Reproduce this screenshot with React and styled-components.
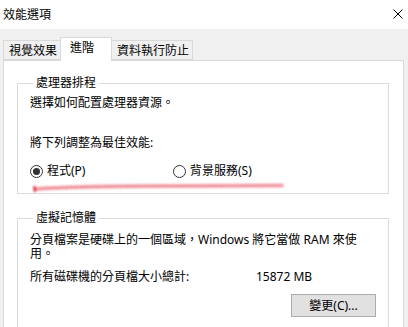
import React from 'react'
import styled, { createGlobalStyle } from 'styled-components'

const GlobalStyle = createGlobalStyle`
  html, body {
    margin: 0;
    padding: 0;
    background: #f0f0f0;
  }
  body {
    font-family: "Noto Sans", "Noto Sans CJK TC", sans-serif;
    font-size: 12px;
    color: #000;
  }
`

const Window = styled.div`
  width: 408px;
  height: 327px;
  overflow: hidden;
  background: #f0f0f0;
  display: flex;
  flex-direction: column;
`

const TitleBar = styled.div`
  height: 29px;
  flex: none;
  background: #fff;
  display: flex;
  align-items: center;
  justify-content: space-between;
  padding: 0 5px 0 3px;
  line-height: 14px;
`

const CloseButton = styled.svg`
  width: 10px;
  height: 10px;
  margin-top: -2px;
`

const Body = styled.div`
  padding: 8px 4px 0 3px;
  display: flex;
  flex-direction: column;
`

const TabRow = styled.div`
  display: flex;
  align-items: flex-end;
  height: 23px;
  position: relative;
  z-index: 1;
`

const Tab = styled.div`
  box-sizing: border-box;
  width: ${p => p.$w}px;
  height: ${p => (p.$active ? 24 : 20)}px;
  border: 1px solid #d9d9d9;
  border-bottom: ${p => (p.$active ? 'none' : '1px solid #d9d9d9')};
  background: ${p => (p.$active ? '#fff' : '#f0f0f0')};
  margin-bottom: ${p => (p.$active ? '-1px' : '0')};
  margin-left: ${p => (p.$first ? 0 : -1)}px;
  padding: ${p => (p.$active ? '3px 0 0 9px' : '3px 0 0 5px')};
  line-height: 14px;
  white-space: nowrap;
`

const Panel = styled.div`
  box-sizing: border-box;
  background: #fff;
  border: 1px solid #d9d9d9;
  height: 280px;
  padding: 15px 14px 0 13px;
`

const Group = styled.fieldset`
  position: relative;
  margin: 0 0 ${p => p.$mb || 0}px 0;
  border: 1px solid #dcdcdc;
  padding: 0 12px ${p => p.$pb}px 12px;
  display: block;
`

const Legend = styled.legend`
  padding: 0 3px 0 3px;
  margin-left: 3px;
  line-height: 14px;
`

const Line = styled.div`
  line-height: 14px;
  margin-top: ${p => p.$mt || 0}px;
  white-space: nowrap;
`

const RadioRow = styled.div`
  display: flex;
  align-items: center;
  margin-top: 14px;
  height: 14px;
`

const RadioItem = styled.label`
  display: flex;
  align-items: center;
  gap: 4px;
  width: ${p => p.$w}px;
  line-height: 14px;
`

const RadioCircle = styled.span`
  box-sizing: border-box;
  width: 13px;
  height: 13px;
  border-radius: 50%;
  border: 1px solid #333;
  background: #fff;
  display: flex;
  align-items: center;
  justify-content: center;
  &::after {
    content: '';
    width: 7px;
    height: 7px;
    border-radius: 50%;
    background: ${p => (p.$checked ? '#333' : 'transparent')};
  }
`

const Squiggle = styled.svg`
  position: absolute;
  left: 14px;
  top: 91px;
  width: 254px;
  height: 12px;
  pointer-events: none;
`

const TotalRow = styled.div`
  display: flex;
  line-height: 14px;
  margin-top: 9px;
`

const TotalLabel = styled.span`
  width: 226px;
`

const ButtonRow = styled.div`
  display: flex;
  justify-content: flex-end;
  margin-top: 10px;
`

const Button = styled.button`
  box-sizing: border-box;
  width: 85px;
  height: 23px;
  background: #e1e1e1;
  border: 1px solid #adadad;
  font: inherit;
  color: #000;
  padding: 0;
  line-height: 14px;
`

function Radio({ checked, label, w }) {
  return (
    <RadioItem $w={w}>
      <RadioCircle $checked={checked} />
      <span>{label}</span>
    </RadioItem>
  )
}

export default function App() {
  return (
    <Window>
      <GlobalStyle />
      <TitleBar>
        <span>效能選項</span>
        <CloseButton viewBox="0 0 10 10">
          <path d="M0.5 0.5 L9.5 9.5 M9.5 0.5 L0.5 9.5" stroke="#000" strokeWidth="1" fill="none" />
        </CloseButton>
      </TitleBar>
      <Body>
        <TabRow>
          <Tab $w={58} $first>視覺效果</Tab>
          <Tab $w={52} $active>進階</Tab>
          <Tab $w={82}>資料執行防止</Tab>
        </TabRow>
        <Panel>
          <Group $pb={15} $mb={17}>
            <Legend>處理器排程</Legend>
            <Line $mt={6}>選擇如何配置處理器資源。</Line>
            <Line $mt={26}>將下列調整為最佳效能:</Line>
            <RadioRow>
              <Radio checked label="程式(P)" w={143} />
              <Radio label="背景服務(S)" />
            </RadioRow>
            <Squiggle viewBox="0 0 254 12">
              <defs>
                <filter id="soft" x="-5%" y="-50%" width="110%" height="200%">
                  <feGaussianBlur stdDeviation="0.8" />
                </filter>
              </defs>
              <g filter="url(#soft)" fill="none" strokeLinecap="round">
                <path d="M3 8 C 40 5.5, 90 5, 140 5 S 220 4.5, 250 4.5" stroke="#ef8a95" strokeWidth="4" opacity="0.7" />
                <path d="M3 8 C 40 5.5, 90 5, 140 5 S 220 4.5, 250 4.5" stroke="#e2404f" strokeWidth="1.6" opacity="0.45" strokeDasharray="3 2" />
                <path d="M2.5 6 L3 10" stroke="#e0283a" strokeWidth="2.6" opacity="0.9" />
              </g>
            </Squiggle>
          </Group>
          <Group $pb={20}>
            <Legend>虛擬記憶體</Legend>
            <Line $mt={8}>分頁檔案是硬碟上的一個區域，Windows 將它當做 RAM 來使</Line>
            <Line>用。</Line>
            <TotalRow>
              <TotalLabel>所有磁碟機的分頁檔大小總計:</TotalLabel>
              <span>15872 MB</span>
            </TotalRow>
            <ButtonRow>
              <Button>變更(C)...</Button>
            </ButtonRow>
          </Group>
        </Panel>
      </Body>
    </Window>
  )
}
